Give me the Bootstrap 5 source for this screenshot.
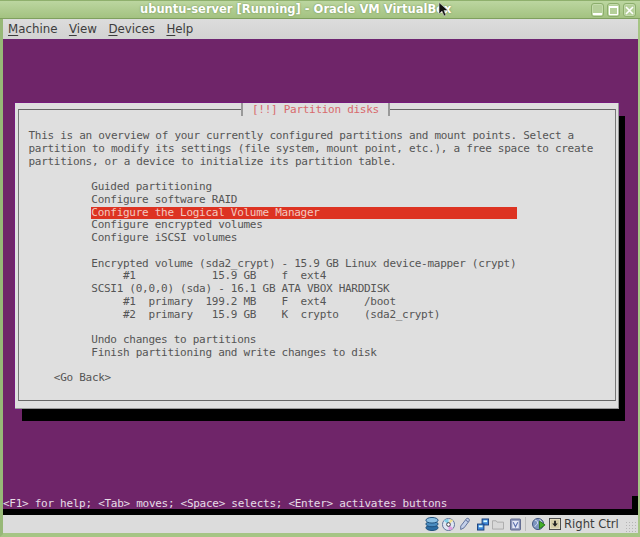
<!DOCTYPE html>
<html lang="en">
<head>
<meta charset="utf-8">
<title>ubuntu-server [Running] - Oracle VM VirtualBox</title>
<link href="https://cdn.jsdelivr.net/npm/bootstrap@5.3.0/dist/css/bootstrap.min.css" rel="stylesheet">
<style>
html,body{margin:0;width:640px;height:537px;overflow:hidden;background:#a6c585}
.vbwin{width:640px;height:537px;border-left:3px solid #97b877;border-right:2px solid #a6c585;border-bottom:3px solid #a6c585;position:relative;font-family:"DejaVu Sans",sans-serif}
.titlebar{height:19px;background:linear-gradient(#bcd6a0,#a3c281);border-top:1px solid #8fb06d;margin:0 -2px 0 -3px;border-bottom:1px solid #7f9f5f;color:#fff;font-weight:700;font-size:11.5px;line-height:17px;text-shadow:0 0 2px #6d8c50;padding-left:140px}
.winbtns{position:absolute;top:3px;right:2px;gap:3px}
.winbtn{width:13px;height:14px;border:1px solid #8cae6c;border-radius:3px;background:#b5cf9a;box-shadow:inset 0 0 0 1px #c4dbac}
.minbtn{padding-bottom:1px}
.menubar{height:21px;background:linear-gradient(#dcdcdc,#d2d2d2);border-bottom:1px solid #6d2570;font-size:11.8px;line-height:20px;color:#3c3c3c;padding-left:5px;gap:11.5px}
.menubar u{text-underline-offset:2px;text-decoration-thickness:1px}
.console{background:#6f2569;height:475px;font-family:"DejaVu Sans Mono",monospace;font-size:11px;letter-spacing:-.28px;line-height:12.75px}
.boxwrap{padding:63px 0 0 12px}
.dlg{width:604px;height:306px;background:#dfdfdf;position:relative;color:#555;outline:1px solid #761a7c}
.dlg::before{content:"";position:absolute;left:7px;top:13px;right:-6px;bottom:-12px;background:#000;z-index:0}
.dlgface{position:absolute;inset:0;background:#dfdfdf;border-bottom:1px solid #999;border-right:1px solid #999}
.frame{position:absolute;left:3px;top:6px;width:598px;height:292px;border:1px solid #666;border-right-color:#777;border-left-color:#777;padding:20px 0 0 9.5px}
.dlgtitle{position:absolute;left:222px;top:-7px;height:13px;background:#dfdfdf;color:#d8696c;padding:0 9px;line-height:13px;border-left:2px solid #999;border-right:2px solid #999;white-space:pre}
.rowline{height:12.75px;white-space:pre}
.listblock{padding-left:62.8px}
.hilite{background:#dd3322;color:#f3c9c0;width:426px;height:12.75px}
.statusline{height:13px;line-height:15px;color:#e6dce6;white-space:pre}
.blackend{width:6px;background:#000;margin-left:auto}
.blackstrip{height:6px;background:#000}
.statusbar{height:18px;background:#dcdcdc;font-size:11.6px;line-height:18px;color:#3c3c3c;padding-left:422px}
.statusbar svg{display:block;flex:none}
.g3{margin-right:3px}.g4{margin-right:4px}.g6{margin-right:6px}.g7{margin-right:7px}
.sepr{width:1px;height:14px;background:#bcbcbc;margin-right:6px}
.grip{position:absolute;right:1px;bottom:1px;width:12px;height:12px;background:radial-gradient(circle,#b5b5b5 1px,transparent 1px) 0 0/3px 3px}
.ptr{position:absolute;left:435px;top:2px}
</style>
</head>
<body>
<div class="vbwin">
  <div class="titlebar">ubuntu-server [Running] - Oracle VM VirtualBox</div>
  <div class="winbtns d-flex">
    <div class="winbtn minbtn d-flex align-items-end justify-content-center"><svg width="9" height="2"><rect width="9" height="2" fill="#fff"/></svg></div>
    <div class="winbtn d-flex align-items-center justify-content-center"><svg width="9" height="9"><rect x=".5" y="1" width="8" height="7.5" fill="none" stroke="#fff"/><rect width="9" height="2" fill="#fff"/></svg></div>
    <div class="winbtn d-flex align-items-center justify-content-center"><svg width="9" height="9"><path d="M1 1 8 8M8 1 1 8" stroke="#fff" stroke-width="1.6"/></svg></div>
  </div>
  <div class="menubar d-flex">
    <span><u>M</u>achine</span><span><u>V</u>iew</span><span><u>D</u>evices</span><span><u>H</u>elp</span>
  </div>
  <div class="console d-flex flex-column">
    <div class="boxwrap">
      <div class="dlg">
        <div class="dlgface"></div>
        <div class="frame">
          <div class="dlgtitle">[!!] Partition disks</div>
          <div class="rowline">This is an overview of your currently configured partitions and mount points. Select a</div>
          <div class="rowline">partition to modify its settings (file system, mount point, etc.), a free space to create</div>
          <div class="rowline">partitions, or a device to initialize its partition table.</div>
          <div class="rowline"> </div>
          <div class="listblock">
            <div class="rowline">Guided partitioning</div>
            <div class="rowline">Configure software RAID</div>
            <div class="hilite rowline">Configure the Logical Volume Manager</div>
            <div class="rowline">Configure encrypted volumes</div>
            <div class="rowline">Configure iSCSI volumes</div>
            <div class="rowline"> </div>
            <div class="rowline">Encrypted volume (sda2_crypt) - 15.9 GB Linux device-mapper (crypt)</div>
            <div class="rowline">     #1            15.9 GB    f  ext4</div>
            <div class="rowline">SCSI1 (0,0,0) (sda) - 16.1 GB ATA VBOX HARDDISK</div>
            <div class="rowline">     #1  primary  199.2 MB    F  ext4      /boot</div>
            <div class="rowline">     #2  primary   15.9 GB    K  crypto    (sda2_crypt)</div>
            <div class="rowline"> </div>
            <div class="rowline">Undo changes to partitions</div>
            <div class="rowline">Finish partitioning and write changes to disk</div>
          </div>
          <div class="rowline"> </div>
          <div class="rowline">    &lt;Go Back&gt;</div>
        </div>
      </div>
    </div>
    <div class="mt-auto d-flex statusline"><span>&lt;F1&gt; for help; &lt;Tab&gt; moves; &lt;Space&gt; selects; &lt;Enter&gt; activates buttons</span><span class="blackend"></span></div>
    <div class="blackstrip"></div>
  </div>
  <div class="statusbar d-flex align-items-center">
    <svg width="14" height="16" class="g3" viewBox="0 0 15 16"><ellipse cx="7.5" cy="12" rx="6.500" ry="3" fill="#2b6ca3" stroke="#1c4c78"/><ellipse cx="7.5" cy="8" rx="6.500" ry="3" fill="#4a8cc0" stroke="#1c4c78"/><ellipse cx="7.5" cy="4" rx="6.500" ry="3" fill="#8cc0e4" stroke="#1c4c78"/></svg>
    <svg width="13" height="13" class="g4" viewBox="0 0 14 14"><circle cx="7" cy="7" r="6.500" fill="#dfe6f2" stroke="#5a6d96"/><path d="M7 7 2 3A6 6 0 0 1 7 1Z" fill="#7fd0e8"/><path d="M7 7 12 11A6 6 0 0 1 7 13Z" fill="#e0a0e0"/><path d="M7 7 12 3A6 6 0 0 0 9 1Z" fill="#f0e090"/><circle cx="7" cy="7" r="2" fill="#fff" stroke="#334"/></svg>
    <svg width="11" height="14" class="g7" viewBox="0 0 13 15"><path d="M9 1c2-1 4 1 3 3L6 12l-4 2 0-4Z" fill="#c3cfe8" stroke="#4d6190"/><path d="M8 3l3 2" stroke="#4d6190"/></svg>
    <svg width="12" height="13" class="g3" viewBox="0 0 13 14"><rect x="5.500" y="1" width="7" height="6.500" fill="#3d86d8" stroke="#1a3f78"/><rect x=".5" y="6.500" width="7" height="6.500" fill="#3d86d8" stroke="#1a3f78"/><rect x="2" y="8" width="4" height="2" fill="#dff"/><rect x="7" y="2.500" width="4" height="2" fill="#dff"/></svg>
    <svg width="12" height="12" class="g6" viewBox="0 0 13 12"><path d="M.5 2.500h4l1 1.500h7v7.500H.5Z" fill="#d8d8d8" stroke="#a8a8a8"/></svg>
    <svg width="11" height="13" class="g4" viewBox="0 0 12 13"><rect x=".5" y=".5" width="11" height="12" rx="1" fill="#8a94b8" stroke="#5a648a"/><rect x="2.500" y="2.500" width="7" height="8" fill="#e4e8f6"/><path d="M3.500 4 6 9 8.500 4" fill="none" stroke="#5a6fae" stroke-width="1.200"/></svg>
    <span class="sepr"></span>
    <svg width="14" height="16" class="g3" viewBox="0 0 15 16"><circle cx="6.500" cy="8" r="6" fill="#7d95c0" stroke="#3d527c"/><path d="M3 4c2 0 3 1 3 3S3 9 3 11M8 3l2 2-1 2" stroke="#d5dfef" fill="none"/><path d="M8 5 14 9 8 13Z" fill="#43b02a" stroke="#2a7518"/></svg>
    <svg width="12" height="12" class="g3" viewBox="0 0 13 13"><rect x=".5" y=".5" width="12" height="12" fill="#e6dfc4" stroke="#444"/><rect x="2" y="2" width="9" height="9" fill="#d5cda8"/><path d="M6.500 9.500 3.500 6H5.500V3H7.500V6H9.500Z" fill="#222"/></svg>
    <span>Right Ctrl</span>
    <div class="grip"></div>
  </div>
  <svg class="ptr" width="11" height="15" viewBox="0 0 11 15"><path d="M1 .5V12l3-2.800 2 4.800 2-.8-2-4.700h4Z" fill="#111" stroke="#ddd" stroke-width=".6"/></svg>
</div>
</body>
</html>
